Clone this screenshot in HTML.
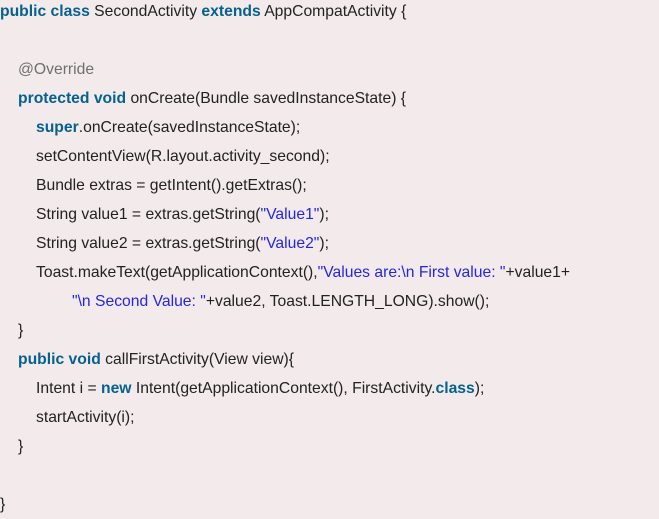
<!DOCTYPE html><html><head><style>
html,body{margin:0;padding:0;background:#f3eaec;width:659px;height:514px;overflow:hidden}
.c{position:absolute;top:-3px;left:0;font-family:"Liberation Sans",sans-serif;font-size:15.7px;line-height:29px;color:#222}
.c div{height:29px;white-space:nowrap}
.l1{padding-left:18px}.l2{padding-left:36px}.l3{padding-left:72px}
b{color:#06618f;font-weight:bold}
.s{color:#2525e8}
.a{color:#707070}
</style></head><body><div class="c">
<div><b>public class</b> SecondActivity <b>extends</b> AppCompatActivity {</div>
<div></div>
<div class="l1"><span class="a">@Override</span></div>
<div class="l1"><b>protected void</b> onCreate(Bundle savedInstanceState) {</div>
<div class="l2"><b>super</b>.onCreate(savedInstanceState);</div>
<div class="l2">setContentView(R.layout.activity_second);</div>
<div class="l2">Bundle extras = getIntent().getExtras();</div>
<div class="l2">String value1 = extras.getString(<span class="s">"Value1"</span>);</div>
<div class="l2">String value2 = extras.getString(<span class="s">"Value2"</span>);</div>
<div class="l2">Toast.makeText(getApplicationContext(),<span class="s">"Values are:\n First value: "</span>+value1+</div>
<div class="l3"><span class="s">"\n Second Value: "</span>+value2, Toast.LENGTH_LONG).show();</div>
<div class="l1">}</div>
<div class="l1"><b>public void</b> callFirstActivity(View view){</div>
<div class="l2">Intent i = <b>new</b> Intent(getApplicationContext(), FirstActivity.<b>class</b>);</div>
<div class="l2">startActivity(i);</div>
<div class="l1">}</div>
<div></div>
<div>}</div>
</div></body></html>
